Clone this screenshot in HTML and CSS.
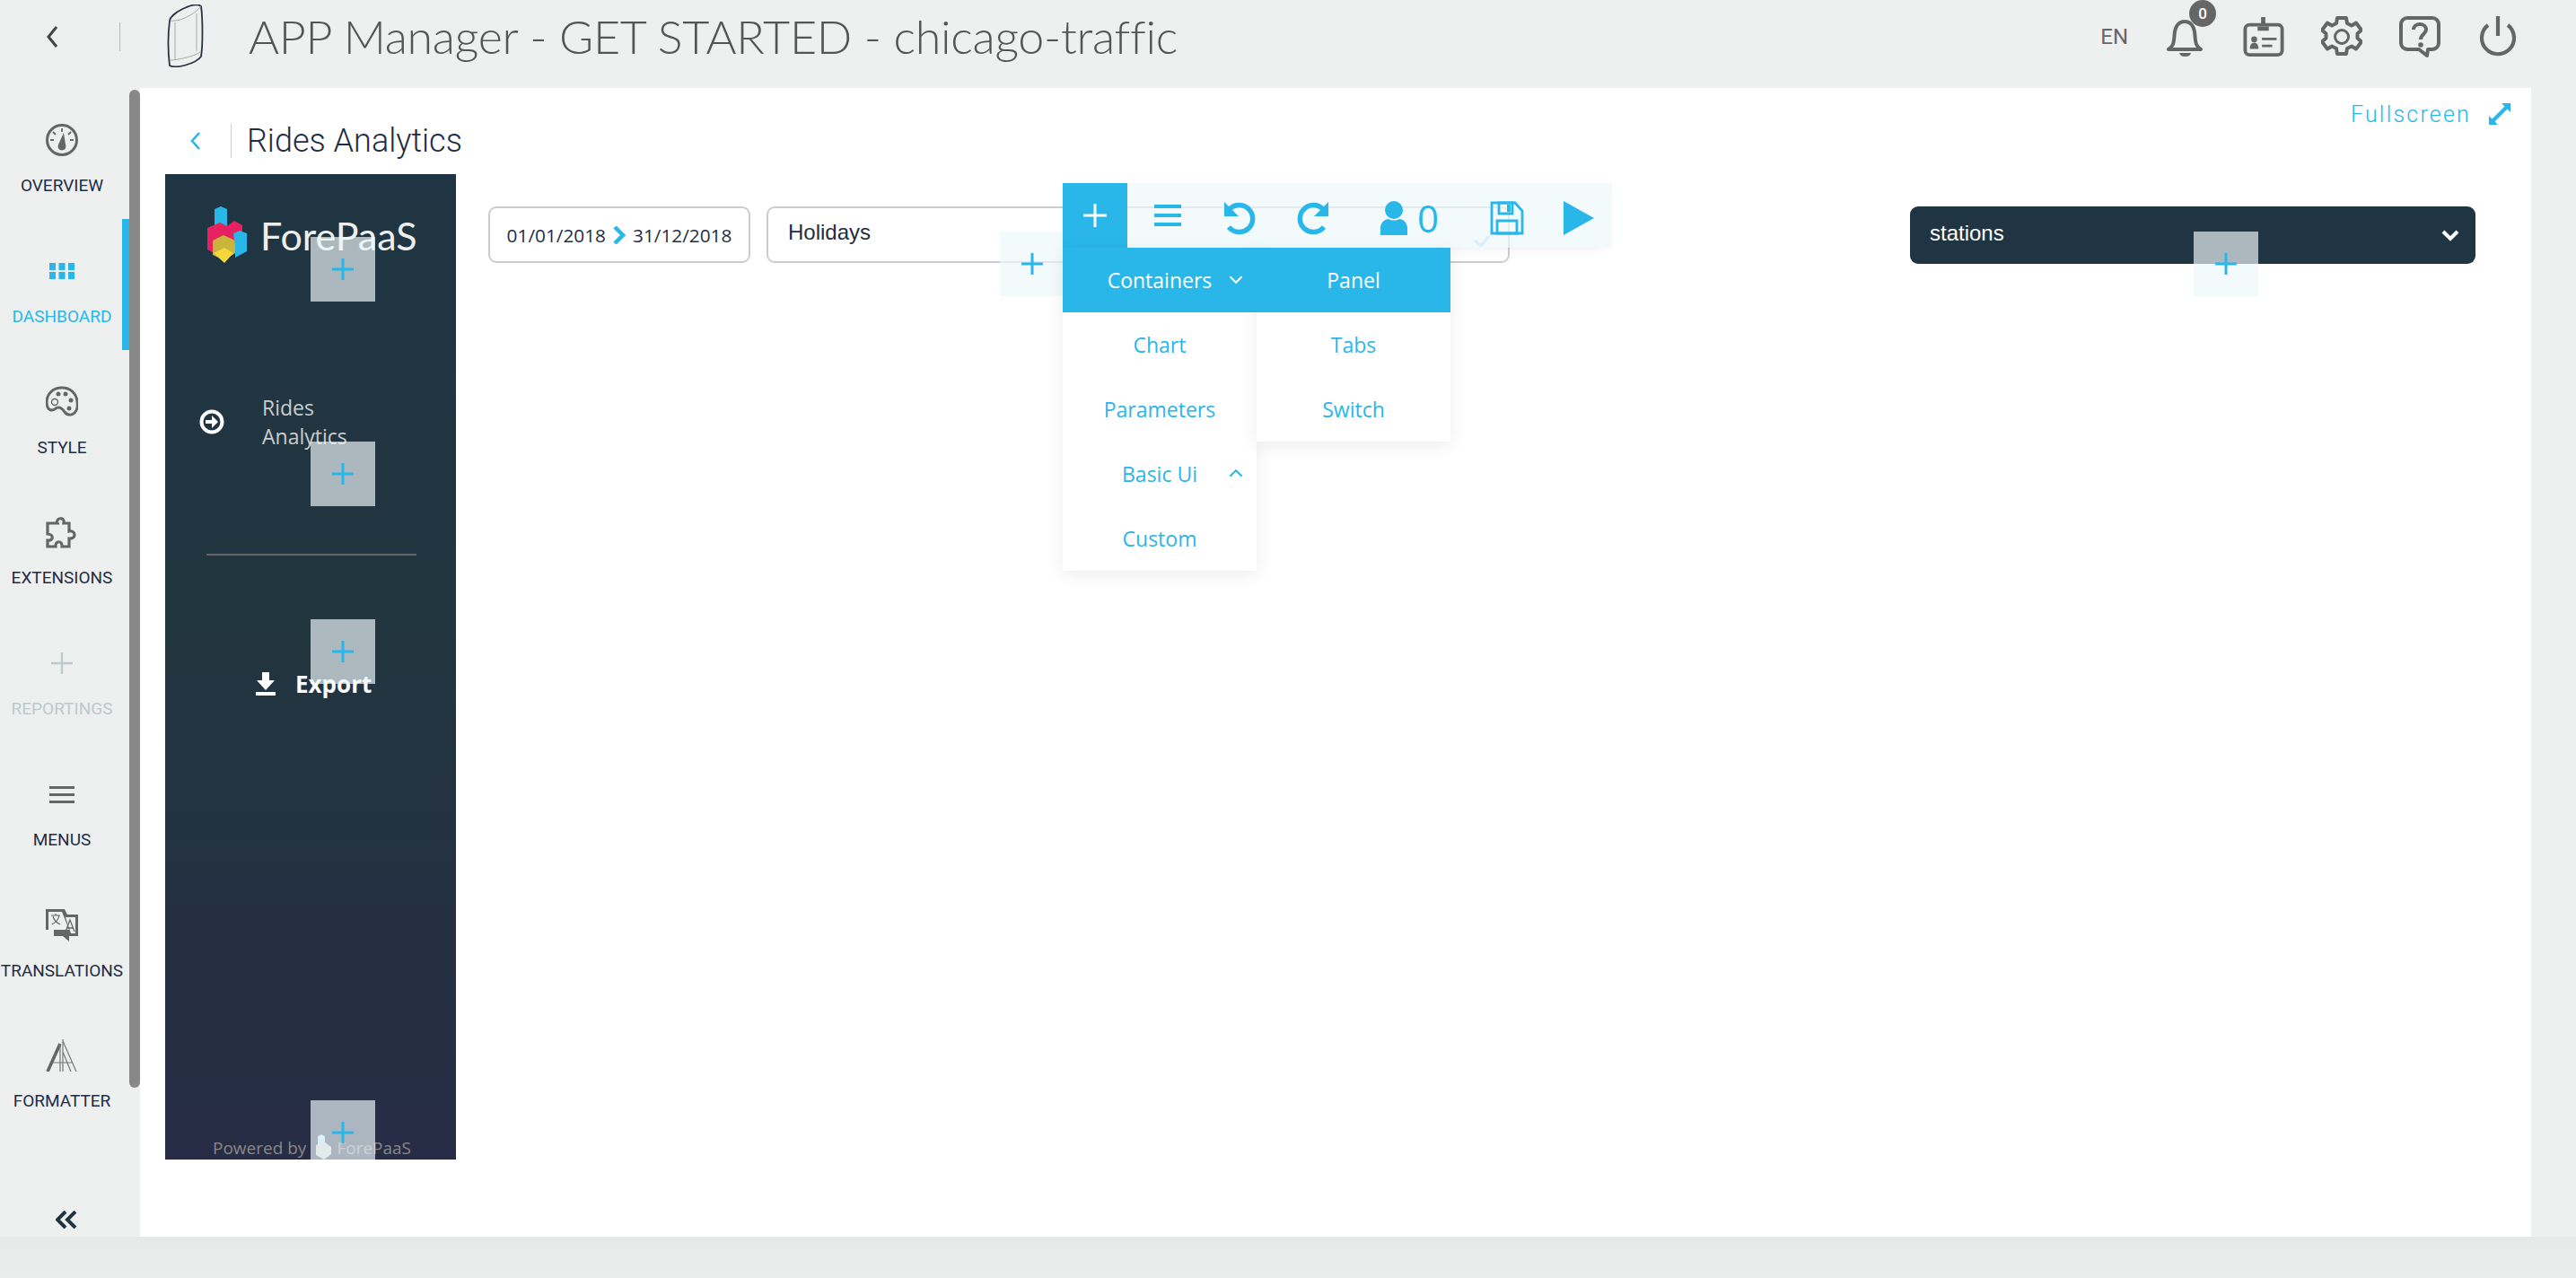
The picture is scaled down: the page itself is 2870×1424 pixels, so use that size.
FILE: index.html
```html
<!DOCTYPE html>
<html lang="en">
<head>
    <meta charset="UTF-8">
    <title>APP Manager - GET STARTED - chicago-traffic</title>
    <link rel="stylesheet" href="styles.css">
</head>
<body>
    <header class="topbar">
        <svg class="back-icon" viewBox="0 0 14 26"><path d="M12 2 3 13l9 11" fill="none" stroke="#444" stroke-width="3"/></svg>
        <span class="topbar-sep"></span>
        <svg class="phone-icon" viewBox="0 0 42 70">
            <path d="M3 18C4 10 30 -4 38 2c2 14 2 44 0 56-6 8-28 14-35 10C1 52 1 34 3 18Z" fill="none" stroke="#2a3440" stroke-width="1.800"/>
            <path d="M4 18c8 2 26-6 34-16M4 62c6 0 28-4 34-10M9 20v42M33 10v42" fill="none" stroke="#aaa" stroke-width="1"/>
        </svg>
        <h1 class="app-title">APP Manager - GET STARTED - chicago-traffic</h1>
        <div class="topbar-tools">
            <span class="lang">EN</span>
            <div class="bell">
                <svg class="tool-icon" viewBox="0 0 44 46">
                    <path d="M3 37c5-3 6-7 6.500-15C10 12 14 6 21 6s11 6 11.500 16c.5 8 1.500 12 6.500 15Z" fill="none" stroke="#666" stroke-width="4" stroke-linejoin="round"/>
                    <path d="M15 41h13c-1 3-3 4-6.500 4S16 44 15 41Z" fill="#666"/>
                </svg>
                <span class="bell-badge">0</span>
            </div>
            <svg class="tool-icon" viewBox="0 0 48 46">
                <rect x="2.500" y="9" width="43" height="35" rx="5" fill="none" stroke="#666" stroke-width="4"/>
                <path d="M21 0h5v9h-5zM17 11h13v5H17z" fill="#666"/>
                <circle cx="13" cy="26" r="3.400" fill="#666"/>
                <path d="M8 37c0-5 2-7 5-7s5 2 5 7Z" fill="#666"/>
                <path d="M22 24h17v3H22zM22 32h12v3H22z" fill="#666"/>
            </svg>
            <svg class="tool-icon" viewBox="0 0 46 46">
                <path d="M18 2h10l1 6 5 2.500 5-3 6 8-4.500 4v5l4.500 4-6 8-5-3-5 2.500-1 6H18l-1-6-5-2.500-5 3-6-8 4.500-4v-5L1 15.500l6-8 5 3L17 8Z" fill="none" stroke="#666" stroke-width="4" stroke-linejoin="round"/>
                <circle cx="23" cy="23" r="7.500" fill="none" stroke="#666" stroke-width="3"/>
            </svg>
            <svg class="tool-icon" viewBox="0 0 46 46">
                <path d="M9 2h28a7 7 0 0 1 7 7v21a7 7 0 0 1-7 7h-5l-1 7-9-7H9a7 7 0 0 1-7-7V9a7 7 0 0 1 7-7Z" fill="none" stroke="#666" stroke-width="4" stroke-linejoin="round"/>
                <path d="M16 15c0-8 14-8 14 0 0 5-6 5-6 11" fill="none" stroke="#666" stroke-width="4"/>
                <circle cx="24" cy="32" r="2.800" fill="#666"/>
            </svg>
            <svg class="tool-icon" viewBox="0 0 42 46">
                <path d="M21 0v22M10 10a18 18 0 1 0 22 0" fill="none" stroke="#666" stroke-width="4.200"/>
            </svg>
        </div>
    </header>

    <div class="workspace">
        <nav class="sidenav">
            <div class="nav-main">
                <ul class="nav-list">
                    <li class="nav-item">
                        <svg class="nav-icon" viewBox="0 0 36 36">
                            <circle cx="18" cy="18" r="16.500" fill="none" stroke="#666" stroke-width="3"/>
                            <path d="M18 5v4M8 9l3 3M28 9l-3 3M5 18h4M27 18h4" stroke="#666" stroke-width="1.800"/>
                            <path d="M20 10 22 23a4.500 4.500 0 1 1-8 0Z" fill="#666"/>
                        </svg>
                        <span class="nav-label">OVERVIEW</span>
                    </li>
                    <li class="nav-item active">
                        <svg class="nav-icon" viewBox="0 0 36 36">
                            <path d="M4 9h7v8H4zM14.500 9h7v8h-7zM25 9h7v8h-7zM4 19h7v8H4zM14.500 19h7v8h-7zM25 19h7v8h-7z" fill="#29b6e9"/>
                        </svg>
                        <span class="nav-label">DASHBOARD</span>
                    </li>
                    <li class="nav-item">
                        <svg class="nav-icon" viewBox="0 0 36 36">
                            <path d="M18 2C8 2 1 9 1 18c0 5 2 9 6 9 3 0 4-3 7-3s5 2 7 5c3 4 8 4 11 1 3-3 4-7 3-13C34 8 27 2 18 2Z" fill="none" stroke="#666" stroke-width="3"/>
                            <circle cx="10" cy="18" r="3.500" fill="none" stroke="#666" stroke-width="1.400"/>
                            <circle cx="14" cy="9" r="2.500" fill="#666"/><circle cx="22" cy="9" r="2.500" fill="#666"/>
                            <circle cx="28" cy="16" r="2.500" fill="#666"/><circle cx="26" cy="25" r="2.500" fill="#666"/>
                        </svg>
                        <span class="nav-label">STYLE</span>
                    </li>
                    <li class="nav-item">
                        <svg class="nav-icon" viewBox="0 0 36 36">
                            <path d="M2 8h11c-3-6 9-8 7 0h6v9c7-2 9 9 0 8v9h-8c1-7-8-7-7 0H2v-7c7 1 7-7 0-7Z" fill="none" stroke="#666" stroke-width="3.200"/>
                        </svg>
                        <span class="nav-label">EXTENSIONS</span>
                    </li>
                    <li class="nav-item disabled">
                        <svg class="nav-icon" viewBox="0 0 36 36">
                            <path d="M18 6v24M6 18h24" stroke="#bccacd" stroke-width="2.400"/>
                        </svg>
                        <span class="nav-label">REPORTINGS</span>
                    </li>
                    <li class="nav-item">
                        <svg class="nav-icon" viewBox="0 0 36 36">
                            <path d="M4 9h28v3H4zM4 17h28v3H4zM4 25h28v3H4z" fill="#666"/>
                        </svg>
                        <span class="nav-label">MENUS</span>
                    </li>
                    <li class="nav-item">
                        <svg class="nav-icon" viewBox="0 0 36 36">
                            <path d="M0 0h21l3 6h12v24H26v6l-7-6H9v-7H0Z" fill="#666"/>
                            <path d="M3 3h15l8 20H3Z" fill="#eef0f0"/>
                            <path d="M22 9h11v18H28Z" fill="#eef0f0"/>
                            <path d="M6 7h10M11 5v2M7 17c4-2 7-5 8-10M8 8c1 4 4 7 8 9" fill="none" stroke="#666" stroke-width="1.200"/>
                            <path d="M22 25l5-13 5 13M24 21h6" fill="none" stroke="#666" stroke-width="1.300"/>
                        </svg>
                        <span class="nav-label">TRANSLATIONS</span>
                    </li>
                    <li class="nav-item">
                        <svg class="nav-icon" viewBox="0 0 36 36">
                            <path d="M2 36 16 5" fill="none" stroke="#666" stroke-width="3.600"/>
                            <path d="M16 5v31M19 0v37M19 2l15 34M19 14l9 22M8 26h22" fill="none" stroke="#777" stroke-width="1.200"/>
                        </svg>
                        <span class="nav-label">FORMATTER</span>
                    </li>
                    <li class="nav-item">
                        <svg class="nav-icon" viewBox="0 0 36 36">
                            <path d="M12 19h12" stroke="#888" stroke-width="1.500"/>
                        </svg>
                    </li>
                </ul>
                <div class="nav-footer">
                    <svg class="collapse-icon" viewBox="0 0 24 20"><path d="M11 1 2 10l9 9M22 1l-9 9 9 9" fill="none" stroke="#1f3543" stroke-width="4"/></svg>
                </div>
            </div>
            <div class="nav-scroll"><div class="nav-thumb"></div></div>
        </nav>

        <main class="canvas">
            <div class="page-head">
                <svg class="page-back" viewBox="0 0 12 22"><path d="M10 2 2 11l8 9" fill="none" stroke="#29b6e9" stroke-width="2.600"/></svg>
                <span class="page-sep"></span>
                <h2 class="page-title">Rides Analytics</h2>
                <div class="fullscreen">
                    <span>Fullscreen</span>
                    <svg class="fullscreen-icon" viewBox="0 0 24 24">
                        <path d="M14 0h10v10l-3.500-3.500L6.500 20.500 10 24H0V14l3.500 3.500L17.500 3.500Z" fill="#29b6e9"/>
                    </svg>
                </div>
            </div>

            <div class="page-body">
                <aside class="dash-menu">
                    <div class="dash-logo">
                        <svg class="logo-mark" viewBox="0 0 46 64">
                            <path d="M16 0l7 3v24l-7 3-7-3V3Z" fill="#29b6e9"/>
                            <path d="M1 24l14-6 8 4 8-6 9 5v24L20 58 1 48Z" fill="#e6215f"/>
                            <path d="M7 38l12-6 13 6v14l-12 8-13-6Z" fill="#c9b53a"/>
                            <path d="M8 52l12-6 10 6-10 11Z" fill="#f5d63d"/>
                            <path d="M30 30l7-3 8 3v20l-13 7V44Z" fill="#29b6e9"/>
                        </svg>
                        <span class="logo-text">ForePaaS</span>
                    </div>
                    <div class="dash-link">
                        <svg class="dash-link-icon" viewBox="0 0 28 28">
                            <circle cx="14" cy="14" r="11.500" fill="none" stroke="#fff" stroke-width="4"/>
                            <path d="M7 12h7V7l7 7-7 7v-5H7Z" fill="#fff"/>
                        </svg>
                        <span class="dash-link-text">Rides Analytics</span>
                    </div>
                    <hr class="dash-rule">
                    <div class="dash-export">
                        <svg class="export-icon" viewBox="0 0 22 26">
                            <path d="M7 0h8v9h6L11 20 1 9h6ZM0 22h22v4H0Z" fill="#fff"/>
                        </svg>
                        <span>Export</span>
                    </div>
                    <div class="dash-powered">
                        <span>Powered by</span>
                        <svg class="powered-mark" viewBox="0 0 20 28">
                            <path d="M7 0l4 2v10H3V2Z" fill="#a8dff5"/>
                            <path d="M1 12l9-4 8 6v8l-8 6-9-5Z" fill="#ccc"/>
                        </svg>
                        <span>ForePaaS</span>
                    </div>
                </aside>

                <div class="filters">
                    <div class="filter-date">
                        <span>01/01/2018</span>
                        <svg class="date-arrow" viewBox="0 0 14 20"><path d="M2 1l9 9-9 9" fill="none" stroke="#29b6e9" stroke-width="4.500"/></svg>
                        <span>31/12/2018</span>
                    </div>
                    <div class="filter-select">
                        <span>Holidays</span>
                        <svg class="check-icon" viewBox="0 0 20 14"><path d="M2 6l7 6 9-11" fill="none" stroke="#a9dff4" stroke-width="3"/></svg>
                    </div>
                    <div class="filter-stations">
                        <span>stations</span>
                        <svg class="stations-chevron" viewBox="0 0 20 14"><path d="M2 3l8 8 8-8" fill="none" stroke="#fff" stroke-width="4"/></svg>
                    </div>
                </div>
            </div>

            <!-- editor overlay -->
            <div class="add-zone zone-logo"><svg class="zone-plus" viewBox="0 0 24 24"><path d="M12 0v24M0 12h24" stroke="#29b6e9" stroke-width="3"/></svg></div>
            <div class="add-zone zone-link"><svg class="zone-plus" viewBox="0 0 24 24"><path d="M12 0v24M0 12h24" stroke="#29b6e9" stroke-width="3"/></svg></div>
            <div class="add-zone zone-export"><svg class="zone-plus" viewBox="0 0 24 24"><path d="M12 0v24M0 12h24" stroke="#29b6e9" stroke-width="3"/></svg></div>
            <div class="add-zone zone-powered"><svg class="zone-plus" viewBox="0 0 24 24"><path d="M12 0v24M0 12h24" stroke="#29b6e9" stroke-width="3"/></svg></div>
            <div class="add-zone zone-select"><svg class="zone-plus" viewBox="0 0 24 24"><path d="M12 0v24M0 12h24" stroke="#29b6e9" stroke-width="3"/></svg></div>
            <div class="add-zone zone-stations"><svg class="zone-plus" viewBox="0 0 24 24"><path d="M12 0v24M0 12h24" stroke="#29b6e9" stroke-width="3"/></svg></div>

            <div class="edit-toolbar">
                <div class="edit-add"><svg class="edit-add-icon" viewBox="0 0 26 26"><path d="M13 0v26M0 13h26" stroke="#fff" stroke-width="3"/></svg></div>
                <svg class="edit-menu-icon" viewBox="0 0 30 24"><path d="M0 0h30v4H0zM0 10h30v4H0zM0 20h30v4H0z" fill="#29b6e9"/></svg>
                <svg class="edit-undo" viewBox="0 0 38 38">
                    <path d="M8 9a15 15 0 1 1-1 20" fill="none" stroke="#29b6e9" stroke-width="5.500"/>
                    <path d="M2 1v16h16Z" fill="#29b6e9"/>
                </svg>
                <svg class="edit-redo" viewBox="0 0 38 38">
                    <path d="M30 9a15 15 0 1 0 1 20" fill="none" stroke="#29b6e9" stroke-width="5.500"/>
                    <path d="M36 1v16H20Z" fill="#29b6e9"/>
                </svg>
                <div class="edit-users">
                    <svg class="edit-user-icon" viewBox="0 0 32 38">
                        <circle cx="16" cy="10" r="10" fill="#29b6e9"/>
                        <path d="M1 38V30c0-6 5-10 9-10 3 2 9 2 12 0 4 0 9 4 9 10v8Z" fill="#29b6e9"/>
                    </svg>
                    <span>0</span>
                </div>
                <svg class="edit-save" viewBox="0 0 38 38">
                    <path d="M2 2h26l8 9v25H2Z" fill="none" stroke="#29b6e9" stroke-width="2.800"/>
                    <path d="M10 2h15v12H10zM8 22h22v14H8z" fill="none" stroke="#29b6e9" stroke-width="2.800"/>
                    <path d="M19 4h4v8h-4z" fill="#29b6e9"/>
                </svg>
                <svg class="edit-play" viewBox="0 0 34 38"><path d="M0 0 34 19 0 38Z" fill="#29b6e9"/></svg>
            </div>

            <div class="add-menu">
                <ul class="menu-col">
                    <li class="menu-row selected"><span>Containers</span><svg class="menu-chevron" viewBox="0 0 14 10"><path d="M1 2l6 6 6-6" fill="none" stroke="#fff" stroke-width="1.800"/></svg></li>
                    <li class="menu-row">Chart</li>
                    <li class="menu-row">Parameters</li>
                    <li class="menu-row"><span>Basic Ui</span><svg class="menu-chevron" viewBox="0 0 14 10"><path d="M1 8l6-6 6 6" fill="none" stroke="#29b6e9" stroke-width="1.800"/></svg></li>
                    <li class="menu-row">Custom</li>
                </ul>
                <ul class="menu-col">
                    <li class="menu-row selected">Panel</li>
                    <li class="menu-row">Tabs</li>
                    <li class="menu-row">Switch</li>
                </ul>
            </div>
        </main>
    </div>
    <div class="page-foot"></div>
</body>
</html>
```
FILE: styles.css
```css
* {
    box-sizing: border-box;
}
html, body {
    margin: 0;
    padding: 0;
    height: 100%;
    overflow: hidden;
}
body {
    background-color: #eef0f0;
    font-family: Roboto, sans-serif;
    color: #1f2d45;
}
ul {
    list-style: none;
    margin: 0;
    padding: 0;
}

/* top bar */
.topbar {
    display: flex;
    align-items: center;
    height: 98px;
    padding: 0 64px 0 51px;
}
.back-icon {
    width: 14px;
    height: 26px;
    margin-bottom: 17px;
}
.topbar-sep {
    width: 1px;
    height: 32px;
    margin: 0 52px 17px 68px;
    background-color: #bbb;
}
.phone-icon {
    width: 42px;
    height: 70px;
    margin-bottom: 18px;
}
.app-title {
    margin: 0 0 18px 49px;
    font-family: Lato, sans-serif;
    font-size: 52px;
    font-weight: 300;
    letter-spacing: -0.3px;
    white-space: nowrap;
    color: #555;
}
.topbar-tools {
    display: flex;
    align-items: center;
    gap: 41px;
    margin-left: auto;
    margin-bottom: 17px;
}
.lang {
    font-size: 24px;
    color: #666;
}
.tool-icon {
    display: block;
    width: 46px;
    height: 46px;
}
.bell {
    position: relative;
}
.bell-badge {
    position: absolute;
    top: -18px;
    right: -11px;
    width: 30px;
    height: 30px;
    border-radius: 50%;
    background-color: #666;
    color: #fff;
    font-size: 17px;
    font-weight: 500;
    line-height: 30px;
    text-align: center;
}

/* page frame */
.workspace {
    display: flex;
    height: 1280px;
}
.sidenav {
    display: flex;
    width: 156px;
    flex-shrink: 0;
}
.nav-main {
    display: flex;
    flex-direction: column;
    width: 144px;
}
.nav-list {
    flex: 1;
    overflow: hidden;
}
.nav-item {
    position: relative;
    display: flex;
    flex-direction: column;
    align-items: center;
    height: 145.75px;
    padding: 40px 6px 0 0;
}
.nav-item.active::after {
    content: "";
    position: absolute;
    top: 0;
    right: 0;
    bottom: 0;
    width: 8px;
    background-color: #29b6e9;
}
.nav-icon {
    flex-shrink: 0;
    width: 36px;
    height: 36px;
}
.nav-label {
    margin-top: 21px;
    font-size: 19px;
    line-height: 24px;
    white-space: nowrap;
}
.nav-item.active .nav-label {
    color: #29b6e9;
}
.nav-item.disabled .nav-label {
    color: #bccacd;
}
.nav-footer {
    display: flex;
    justify-content: center;
    height: 58px;
    padding: 29px 0 0 4px;
}
.collapse-icon {
    width: 24px;
    height: 20px;
}
.nav-scroll {
    width: 12px;
    padding-top: 2px;
}
.nav-thumb {
    height: 1112px;
    border-radius: 6px;
    background-color: #888;
}
.page-foot {
    height: 46px;
    background: linear-gradient(#e7e8e8, #ebecec);
}

/* white canvas */
.canvas {
    position: relative;
    width: 2664px;
    background-color: #fff;
}
.page-head {
    display: flex;
    align-items: center;
    height: 96px;
    padding: 22px 23px 0 56px;
}
.page-back {
    width: 12px;
    height: 22px;
}
.page-sep {
    width: 1px;
    height: 38px;
    margin: 0 17px 0 33px;
    background-color: #ccc;
}
.page-title {
    margin: 0;
    font-size: 36px;
    font-weight: 300;
    white-space: nowrap;
}
.fullscreen {
    display: flex;
    align-items: center;
    gap: 20px;
    margin-left: auto;
    margin-bottom: 60px;
    font-size: 25px;
    font-weight: 300;
    letter-spacing: 2.2px;
    color: #29b6e9;
}
.fullscreen-icon {
    width: 24px;
    height: 24px;
}
.page-body {
    display: flex;
    padding-left: 28px;
}

/* dashboard side menu */
.dash-menu {
    position: relative;
    width: 324px;
    height: 1098px;
    overflow: hidden;
    background: linear-gradient(#1f3543 0%, #22353f 50%, #262c45 100%);
}
.dash-logo {
    display: flex;
    align-items: center;
    height: 64px;
    margin: 36px 0 0 46px;
}
.logo-mark {
    width: 46px;
    height: 64px;
}
.logo-text {
    margin-left: 14px;
    font-family: Lato, sans-serif;
    font-size: 43px;
    color: #eee;
    white-space: nowrap;
}
.dash-link {
    display: flex;
    align-items: center;
    margin: 144px 0 0 38px;
}
.dash-link-icon {
    width: 28px;
    height: 28px;
    flex-shrink: 0;
}
.dash-link-text {
    width: 120px;
    margin-left: 42px;
    font-family: "Open Sans", sans-serif;
    font-size: 23px;
    line-height: 32px;
    color: #ccc;
}
.dash-rule {
    width: 234px;
    height: 2px;
    margin: 115px 0 0 46px;
    border: 0;
    background-color: #666;
}
.dash-export {
    display: flex;
    align-items: center;
    gap: 22px;
    margin: 125px 0 0 101px;
    font-family: "Open Sans", sans-serif;
    font-size: 26px;
    font-weight: 700;
    color: #fff;
}
.export-icon {
    width: 22px;
    height: 26px;
}
.dash-powered {
    position: absolute;
    left: 53px;
    bottom: 0;
    display: flex;
    align-items: flex-end;
    font-family: "Open Sans", sans-serif;
    font-size: 19px;
    line-height: 26px;
    color: #888;
    white-space: nowrap;
}
.powered-mark {
    width: 20px;
    height: 28px;
    margin: 0 4px 0 10px;
}

/* filters */
.filters {
    display: flex;
    align-items: flex-start;
    padding: 36px 0 0 36px;
}
.filter-date {
    display: flex;
    align-items: center;
    justify-content: center;
    gap: 8px;
    width: 292px;
    height: 63px;
    border: 2px solid #ccc;
    border-radius: 9px;
    font-family: "Open Sans", sans-serif;
    font-size: 20.800px;
}
.date-arrow {
    width: 14px;
    height: 20px;
}
.filter-select {
    display: flex;
    align-items: center;
    justify-content: space-between;
    width: 828px;
    height: 63px;
    margin-left: 18px;
    padding: 0 19px 0 22px;
    border: 2px solid #ccc;
    border-radius: 9px;
    font-family: "Liberation Sans", sans-serif;
    font-size: 24px;
}
.filter-select span {
    margin-bottom: 5px;
}
.check-icon {
    width: 20px;
    height: 14px;
    margin-top: 14px;
}
.filter-stations {
    display: flex;
    align-items: center;
    justify-content: space-between;
    width: 630px;
    height: 64px;
    margin-left: 446px;
    padding: 0 18px 0 22px;
    border-radius: 9px;
    background-color: #1f3543;
    font-family: "Liberation Sans", sans-serif;
    font-size: 24px;
    color: #fff;
}
.filter-stations span {
    margin-bottom: 5px;
}
.stations-chevron {
    width: 20px;
    height: 14px;
}

/* editor overlay */
.add-zone {
    position: absolute;
    display: flex;
    align-items: center;
    justify-content: center;
    width: 72px;
    height: 72px;
    background-color: rgba(237, 247, 251, 0.68);
}
.zone-plus {
    width: 24px;
    height: 24px;
}
.zone-logo { left: 190px; top: 166px; }
.zone-link { left: 190px; top: 394px; }
.zone-export { left: 190px; top: 592px; }
.zone-powered { left: 190px; top: 1128px; height: 66px; align-items: flex-start; padding-top: 24px; }
.zone-select { left: 958px; top: 160px; }
.zone-stations { left: 2288px; top: 160px; }

.edit-toolbar {
    position: absolute;
    left: 1028px;
    top: 106px;
    display: flex;
    align-items: center;
    width: 612px;
    height: 72px;
    background-color: rgba(237, 247, 251, 0.68);
    box-shadow: 0 8px 14px -8px rgba(0, 0, 0, 0.08);
}
.edit-add {
    display: flex;
    align-items: center;
    justify-content: center;
    width: 72px;
    height: 72px;
    margin-right: 30px;
    background-color: #29b6e9;
}
.edit-add-icon {
    width: 26px;
    height: 26px;
}
.edit-menu-icon {
    width: 30px;
    height: 24px;
    margin-right: 46px;
}
.edit-undo, .edit-redo, .edit-save {
    width: 38px;
    height: 38px;
    margin-top: 5px;
}
.edit-undo {
    margin-right: 44px;
}
.edit-redo {
    margin-right: 55px;
}
.edit-users {
    display: flex;
    align-items: center;
    gap: 10px;
    margin-top: 5px;
    margin-right: 57px;
    font-family: "Open Sans", sans-serif;
    font-size: 42px;
    color: #29b6e9;
}
.edit-user-icon {
    width: 32px;
    height: 38px;
}
.edit-save {
    margin-right: 44px;
}
.edit-play {
    width: 34px;
    height: 38px;
    margin-top: 5px;
}

.add-menu {
    position: absolute;
    left: 1028px;
    top: 178px;
    display: flex;
    align-items: flex-start;
}
.menu-col {
    width: 216px;
    background-color: #fff;
    box-shadow: 0 4px 18px rgba(0, 0, 0, 0.08);
}
.menu-row {
    position: relative;
    display: flex;
    align-items: center;
    justify-content: center;
    height: 72px;
    font-family: "Open Sans", sans-serif;
    font-size: 23px;
    color: #29b6e9;
}
.menu-row.selected {
    background-color: #29b6e9;
    color: #fff;
}
.menu-chevron {
    position: absolute;
    right: 15px;
    top: 30px;
    width: 16px;
    height: 11px;
}
```
